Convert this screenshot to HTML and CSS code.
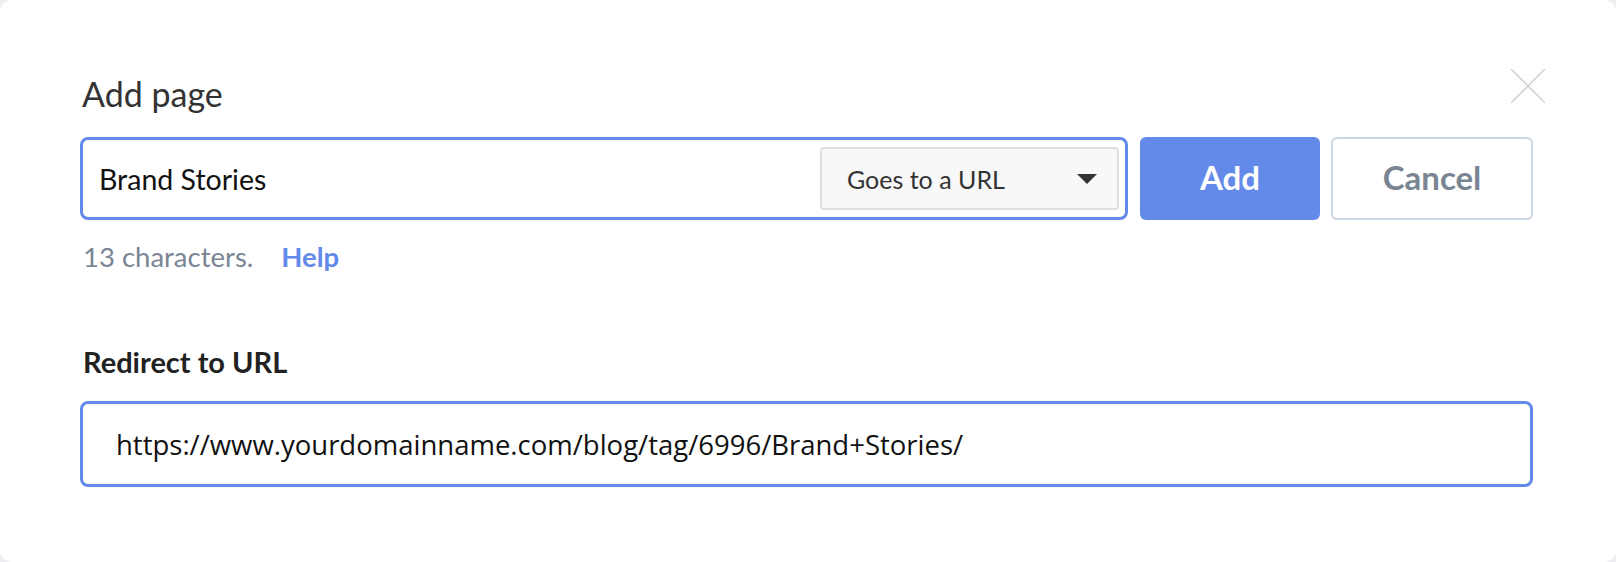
FILE: index.html
```html
<!DOCTYPE html>
<html lang="en">
<head>
<meta charset="utf-8">
<title>Add page</title>
<link rel="stylesheet" href="styles.css">
</head>
<body>
<div class="modal">
  <button class="close" aria-label="Close">
    <svg width="36" height="36" viewBox="0 0 36 36"><path d="M1 1L35 35M35 1L1 35" stroke="#d4d4d4" stroke-width="1.6" fill="none"/></svg>
  </button>
  <h1 class="title">Add page</h1>
  <div class="row">
    <div class="name-field">
      <span class="name-value">Brand Stories</span>
      <div class="select">
        <span>Goes to a URL</span>
        <span class="caret"></span>
      </div>
    </div>
    <button class="btn btn-primary">Add</button>
    <button class="btn btn-secondary">Cancel</button>
  </div>
  <div class="hint">
    <span class="count">13 characters.</span>
    <a class="help" href="#">Help</a>
  </div>
  <div class="label">Redirect to URL</div>
  <div class="url-field">https://www.yourdomainname.com/blog/tag/6996/Brand+Stories/</div>
</div>
</body>
</html>
```
FILE: styles.css
```css
html, body {
  margin: 0;
  padding: 0;
}
body {
  background: #eceef2;
  font-family: Lato, "Liberation Sans", sans-serif;
}
.modal {
  position: relative;
  box-sizing: border-box;
  min-height: 562px;
  background: #fff;
  border-radius: 12px;
  padding: 74px 83px 0 80px;
}
.close {
  position: absolute;
  top: 68px;
  right: 70px;
  width: 36px;
  height: 36px;
  padding: 0;
  border: 0;
  background: none;
}
.close svg { display: block; }
.title {
  margin: 0;
  font-size: 34px;
  line-height: 40px;
  font-weight: 400;
  color: #333;
  padding-left: 2px;
}
.row {
  display: flex;
  margin-top: 23px;
  height: 83px;
}
.name-field {
  flex: 0 0 1048px;
  box-sizing: border-box;
  border: 3px solid #6389e9;
  border-radius: 8px;
  display: flex;
  align-items: center;
  justify-content: space-between;
  padding: 0 6px 0 16px;
}
.name-value {
  font-size: 28.5px;
  color: #111;
}
.select {
  box-sizing: border-box;
  width: 299px;
  height: 63px;
  background: #f8f8f8;
  border: 2px solid #dedede;
  border-radius: 4px;
  display: flex;
  align-items: center;
  justify-content: space-between;
  padding: 0 20px 0 25px;
  font-size: 25px;
  color: #333;
}
.caret {
  width: 0;
  height: 0;
  border-left: 10px solid transparent;
  border-right: 10px solid transparent;
  border-top: 10px solid #333;
}
.btn {
  box-sizing: border-box;
  height: 83px;
  border-radius: 6px;
  font-family: Lato, "Liberation Sans", sans-serif;
  font-size: 33px;
  font-weight: 700;
  padding: 0 0 4px;
}
.btn-primary {
  width: 180px;
  margin-left: 12px;
  background: #6389e9;
  border: 0;
  color: #fff;
}
.btn-secondary {
  width: 202px;
  margin-left: 11px;
  background: #fff;
  border: 2px solid #cbd6e4;
  color: #7a8594;
}
.hint {
  margin-top: 19px;
  display: flex;
  gap: 28px;
  font-size: 27.5px;
  line-height: 36px;
  padding-left: 3px;
}
.count { color: #7a8595; }
.help {
  color: #6389e9;
  font-weight: 700;
  text-decoration: none;
}
.label {
  margin-top: 69px;
  font-size: 29px;
  line-height: 36px;
  font-weight: 700;
  color: #222;
  padding-left: 3px;
}
.url-field {
  margin-top: 21px;
  box-sizing: border-box;
  height: 86px;
  border: 3px solid #6389e9;
  border-radius: 8px;
  display: flex;
  align-items: center;
  padding-left: 33px;
  font-family: "Open Sans", sans-serif;
  font-size: 27.5px;
  color: #111;
}
```
